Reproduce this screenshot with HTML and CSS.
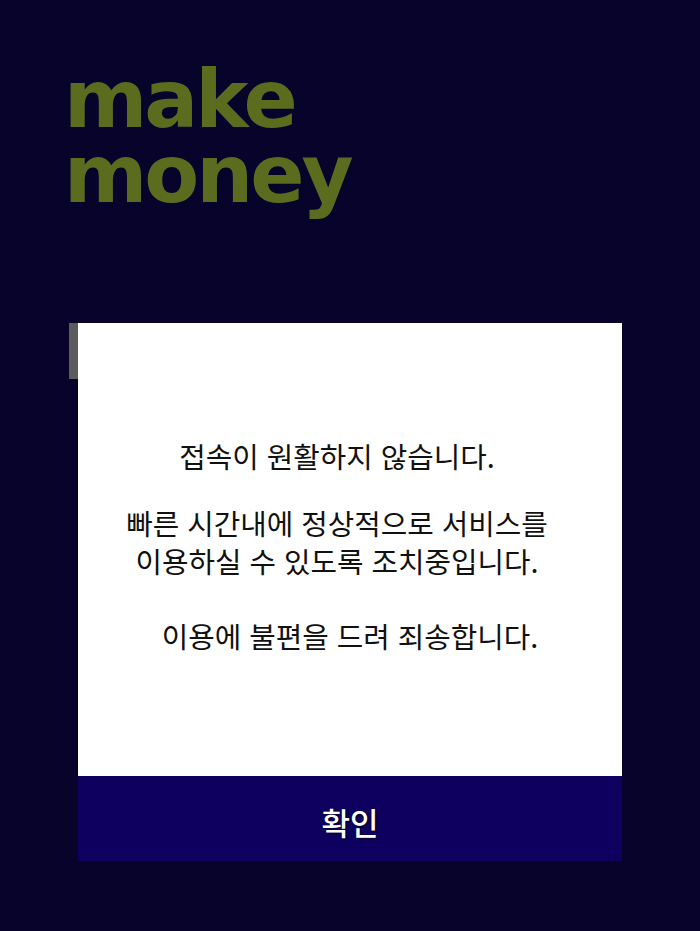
FILE: index.html
```html
<!DOCTYPE html>
<html lang="ko">
<head>
<meta charset="utf-8">
<link rel="stylesheet" href="styles.css">
</head>
<body>
<div class="page">
  <h1 class="logo"><span class="word">make</span><span class="word">money</span></h1>
  <div class="stage">
    <div class="behind"></div>
    <div class="dialog">
      <div class="message">
        <p class="line shift">접속이 원활하지 않습니다.</p>
        <p class="line gap shift">빠른 시간내에 정상적으로 서비스를</p>
        <p class="line shift">이용하실 수 있도록 조치중입니다.</p>
        <p class="line gap2">이용에 불편을 드려 죄송합니다.</p>
      </div>
      <div class="confirm">확인</div>
    </div>
  </div>
</div>
</body>
</html>
```
FILE: styles.css
```css
html, body {
  margin: 0;
  padding: 0;
  background: #07032b;
}
.page {
  width: 700px;
  height: 931px;
  background: #07032b;
  display: flex;
  flex-direction: column;
  font-family: "Noto Sans CJK KR", "Noto Sans", sans-serif;
}
.logo {
  margin: 62px 0 0 64px;
  display: flex;
  flex-direction: column;
  font-family: "DejaVu Sans", "Noto Sans", sans-serif;
  font-weight: 700;
  font-size: 80px;
  line-height: 75px;
  letter-spacing: -3px;
  color: #5c6c1f;
}
.word {
  display: block;
  height: 75px;
}
.stage {
  position: relative;
  margin: 111px 0 0 78px;
  width: 544px;
}
.behind {
  position: absolute;
  left: -9px;
  top: 0;
  width: 9px;
  height: 56px;
  background: #5c5c5c;
}
.dialog {
  display: flex;
  flex-direction: column;
  width: 544px;
}
.message {
  background: #ffffff;
  height: 453px;
  box-sizing: border-box;
  padding-top: 114px;
  color: #111111;
  text-align: center;
}
.line {
  margin: 0;
  font-size: 28.8px;
  line-height: 38px;
}
.line.gap {
  margin-top: 29px;
}
.line.gap2 {
  margin-top: 37px;
}
.line.shift {
  padding-right: 26px;
}
.confirm {
  background: #0e005e;
  height: 85px;
  box-sizing: border-box;
  padding-top: 6px;
  display: flex;
  align-items: center;
  justify-content: center;
  color: #ffffff;
  font-size: 31px;
  font-weight: 500;
  text-shadow: 1px 1px 2px rgba(0,0,0,0.6);
}
```
